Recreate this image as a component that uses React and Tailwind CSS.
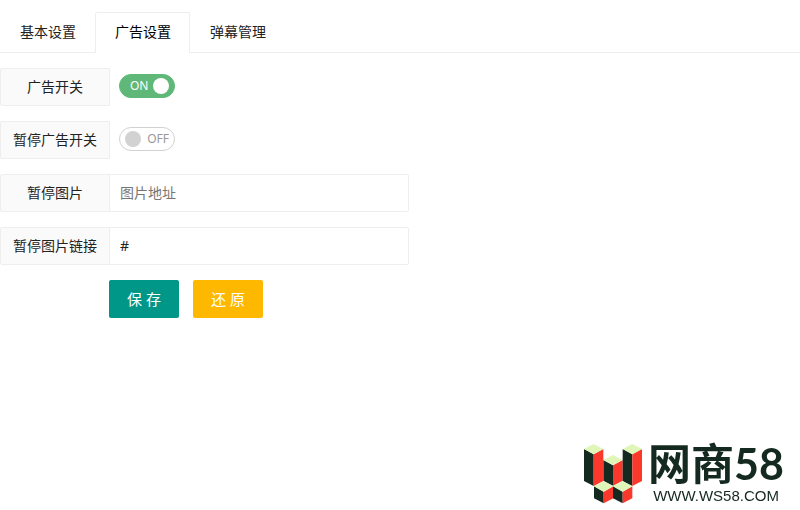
import { useState } from 'react';

const tabs = ['基本设置', '广告设置', '弹幕管理'];

function Row({ label, id, children }) {
  return (
    <div className="flex">
      <label
        htmlFor={id}
        className="w-[110px] h-[38px] shrink-0 flex items-center justify-center border border-[#eee] rounded-l-xs bg-[#fafafa] whitespace-nowrap"
      >
        {label}
      </label>
      {children}
    </div>
  );
}

function Switch({ id, checked, onChange }) {
  return (
    <label
      className={`relative ml-[9px] mt-1.5 w-14 h-6 px-[5px] flex items-center justify-between rounded-full border text-xs cursor-pointer ${
        checked ? 'border-[#5fb878] bg-[#5fb878] text-white' : 'flex-row-reverse border-[#d2d2d2] bg-white text-[#999]'
      }`}
    >
      <input id={id} type="checkbox" className="sr-only" checked={checked} onChange={(e) => onChange(e.target.checked)} />
      <span className={checked ? 'pl-[5px]' : ''}>{checked ? 'ON' : 'OFF'}</span>
      <span className={`size-4 rounded-full ${checked ? 'bg-white' : 'bg-[#d2d2d2]'}`} />
    </label>
  );
}

function TextField({ id, ...props }) {
  return (
    <input
      id={id}
      type="text"
      className="-ml-px w-[300px] h-[38px] min-w-0 pl-2.5 pb-0.5 border border-[#eee] rounded-r-xs bg-white outline-none placeholder:text-[#757575]"
      {...props}
    />
  );
}

function Block({ x, y, height }) {
  return (
    <g transform={`translate(${x} ${y})`}>
      <path d={`M0 15 L29 31 V${height} L0 ${height - 15} Z`} fill="#14291f" />
      <path d={`M29 31 L58 15 V${height - 15} L29 ${height} Z`} fill="#fb382c" />
      <path d="M0 15 L29 0 L58 15 L29 31 Z" fill="#e0f5b8" />
    </g>
  );
}

function Logo() {
  return (
    <div className="fixed right-4 bottom-1.5 flex items-center gap-1.5 text-[#14291f]">
      <svg width="58" height="60" viewBox="0 0 174 180" aria-hidden="true">
        <Block x={58} y={33} height={92} />
        <Block x={0} y={0} height={126} />
        <Block x={116} y={0} height={126} />
        <Block x={30} y={112} height={66} />
        <Block x={87} y={112} height={66} />
      </svg>
      <div className="flex flex-col items-center gap-1">
        <div className="font-['Lato','Noto_Sans_CJK_SC',sans-serif] text-[43px] leading-10 font-bold">网商58</div>
        <div className="font-['Liberation_Sans',sans-serif] text-[15px] leading-4">WWW.WS58.COM</div>
      </div>
    </div>
  );
}

export default function App() {
  const [active, setActive] = useState(1);
  const [adOn, setAdOn] = useState(true);
  const [pauseOn, setPauseOn] = useState(false);
  const [image, setImage] = useState('');
  const [link, setLink] = useState('#');

  const reset = () => {
    setAdOn(true);
    setPauseOn(false);
    setImage('');
    setLink('#');
  };

  return (
    <div className="pt-3 font-['Noto_Sans','Noto_Sans_CJK_SC',sans-serif] text-sm text-[#222]">
      <div role="tablist" className="flex border-b border-[#eee]">
        {tabs.map((tab, i) => (
          <button
            key={tab}
            type="button"
            role="tab"
            aria-selected={active === i}
            onClick={() => setActive(i)}
            className={`-mb-px h-[41px] pb-0.5 border-t ${
              active === i
                ? 'pl-[19px] pr-[18px] border-x border-[#eee] rounded-t-xs bg-white text-black'
                : 'pl-5 pr-[19px] border-transparent'
            }`}
          >
            {tab}
          </button>
        ))}
      </div>

      <form className="mt-[15px] flex flex-col gap-[15px]" onSubmit={(e) => e.preventDefault()}>
        <Row label="广告开关" id="ad">
          <Switch id="ad" checked={adOn} onChange={setAdOn} />
        </Row>
        <Row label="暂停广告开关" id="pause">
          <Switch id="pause" checked={pauseOn} onChange={setPauseOn} />
        </Row>
        <Row label="暂停图片" id="image">
          <TextField id="image" placeholder="图片地址" value={image} onChange={(e) => setImage(e.target.value)} />
        </Row>
        <Row label="暂停图片链接" id="link">
          <TextField id="link" value={link} onChange={(e) => setLink(e.target.value)} />
        </Row>
        <div className="ml-[109px] flex gap-3.5 text-[15px] text-white">
          <button type="submit" className="w-[70px] h-[38px] pt-0.5 rounded-xs bg-[#009688]">
            保 存
          </button>
          <button type="button" onClick={reset} className="w-[70px] h-[38px] pt-0.5 rounded-xs bg-[#ffb800]">
            还 原
          </button>
        </div>
      </form>

      <Logo />
    </div>
  );
}
